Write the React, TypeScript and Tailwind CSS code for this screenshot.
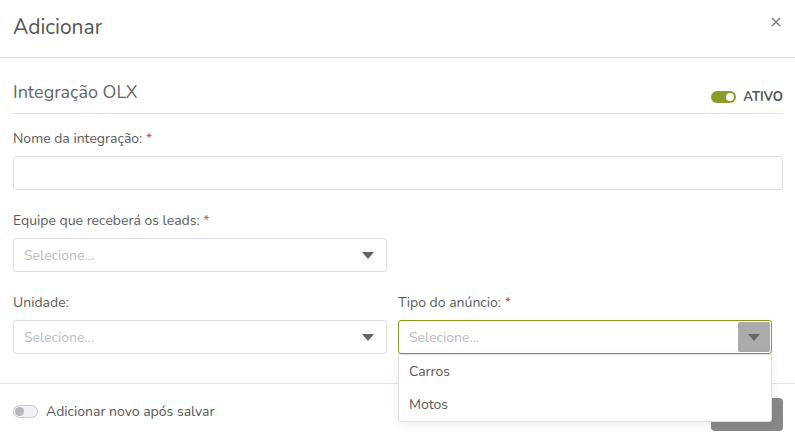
import React from "react";

function Caret() {
  return (
    <svg width="12" height="7" viewBox="0 0 12 7" className="block">
      <path d="M0 0 L12 0 L6 7 Z" fill="#666" />
    </svg>
  );
}

function Label({ text, req }: { text: string; req?: boolean }) {
  return (
    <div className="text-[14px] leading-[18px] text-[#5a5a5a] mb-[8px]">
      {text}
      {req && <span className="text-[#e0484a]"> *</span>}
    </div>
  );
}

function Select() {
  return (
    <div className="h-[34px] border border-[#dedede] rounded-[3px] flex items-center justify-between pl-[10px] pr-[12px]">
      <span className="text-[14px] text-[#bcbcbc]">Selecione...</span>
      <Caret />
    </div>
  );
}

export default function App() {
  return (
    <div
      className="w-[795px] h-[443px] overflow-hidden bg-white relative"
      style={{ fontFamily: "Nunito, Lato, 'Noto Sans', sans-serif" }}
    >
      <div className="h-[58px] flex items-center justify-between pl-[13px] pr-[14px] border-b border-[#e3e3e3]">
        <span className="text-[21px] text-[#555] leading-none -mt-[2px]">Adicionar</span>
        <svg width="10" height="10" viewBox="0 0 10 10" className="-mt-[14px]">
          <path d="M1 1 L9 9 M9 1 L1 9" stroke="#777" strokeWidth="1.4" />
        </svg>
      </div>

      <div className="pl-[13px] pr-[12px] pt-[22px]">
        <div className="flex items-end justify-between border-b border-[#e3e3e3] pb-[8px]">
          <span className="text-[18px] leading-[25px] text-[#666]">Integração OLX</span>
          <div className="flex items-center gap-[7px] mb-[1px]">
            <div className="w-[25px] h-[12px] rounded-full bg-[#8a9d28] relative">
              <div className="absolute right-[2px] top-[2px] w-[8px] h-[8px] rounded-full bg-white" />
            </div>
            <span className="text-[13px] font-bold text-[#555] leading-[14px]">ATIVO</span>
          </div>
        </div>

        <div className="mt-[16px]">
          <Label text="Nome da integração:" req />
          <div className="h-[34px] border border-[#dedede] rounded-[3px]" />
        </div>

        <div className="grid grid-cols-[385px_385px] mt-[22px]">
          <div className="pr-[11px]">
            <Label text="Equipe que receberá os leads:" req />
            <Select />
          </div>
        </div>

        <div className="grid grid-cols-[385px_385px] mt-[22px]">
          <div className="pr-[11px]">
            <Label text="Unidade:" />
            <Select />
          </div>
          <div className="pr-[11px] relative">
            <Label text="Tipo do anúncio:" req />
            <div className="h-[34px] border border-[#8a9d1c] rounded-[3px] flex items-center justify-between pl-[10px] pr-[1px]">
              <span className="text-[14px] text-[#bcbcbc]">Selecione...</span>
              <div className="w-[32px] h-[30px] bg-[#ababab] rounded-[2px] flex items-center justify-center">
                <Caret />
              </div>
            </div>
            <div className="absolute left-0 right-[11px] top-[60px] z-10 bg-white border border-[#e2e2e2] rounded-b-[3px] shadow-[0_2px_10px_rgba(0,0,0,0.08)]">
              <div className="h-[33px] flex items-center pl-[10px] text-[14px] text-[#555]">Carros</div>
              <div className="h-[33px] flex items-center pl-[10px] text-[14px] text-[#555]">Motos</div>
            </div>
          </div>
        </div>
      </div>

      <div className="mt-[29px] border-t border-[#e3e3e3] pl-[13px] pr-[12px] pt-[14px] flex items-start justify-between">
        <div className="flex items-center gap-[8px] mt-[3px]">
          <div className="w-[25px] h-[13px] rounded-full border border-[#c8c8c8] bg-[#f2f2f2] relative">
            <div className="absolute left-[1px] top-[1px] w-[9px] h-[9px] rounded-full bg-[#b5b8bd]" />
          </div>
          <span className="text-[14px] text-[#555]">Adicionar novo após salvar</span>
        </div>
        <div className="w-[72px] h-[33px] bg-[#888] rounded-[4px]" />
      </div>
    </div>
  );
}
